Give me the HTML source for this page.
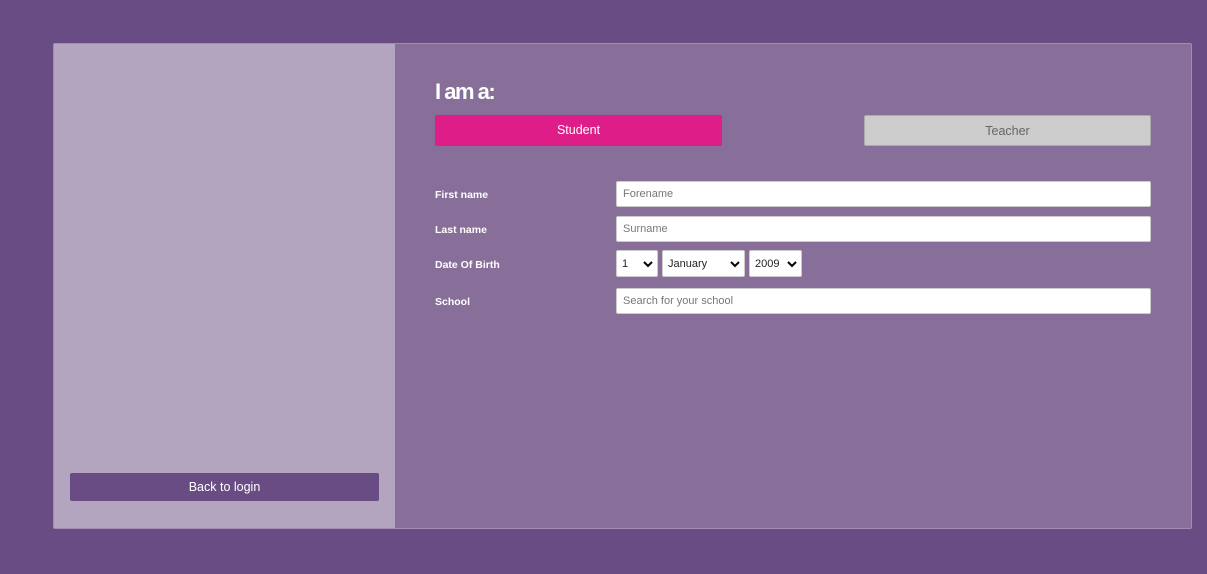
<!DOCTYPE html>
<html><head><style>
*{box-sizing:border-box;margin:0;padding:0}
body{width:1207px;height:574px;background:#684c83;font-family:"Liberation Sans",sans-serif;position:relative;overflow:hidden}
.card{position:absolute;left:53px;top:43px;width:1139px;height:486px;background:#876f99;border:1px solid #a08db0;border-radius:2px}
.left{position:absolute;left:0;top:0;width:341px;height:484px;background:#b3a5c0}
.back{position:absolute;left:16px;top:429px;width:309px;height:28px;background:#684c83;border-radius:2px;color:#fff;font-size:12.5px;text-align:center;line-height:28px}
h1{position:absolute;left:381px;top:35px;color:#fff;font-size:22px;font-weight:bold;letter-spacing:-1.5px}
.btn{position:absolute;top:71px;height:31px;font-size:12.5px;text-align:center;line-height:30px;border-radius:2px}
.lbl{position:absolute;left:381px;color:#fff;font-size:10.5px;font-weight:bold}
.inp{position:absolute;left:562px;width:535px;height:26px;background:#fff;border:1px solid #ccc;border-radius:2px;font-size:11px;color:#777;padding-left:6px;line-height:24px}
.sel{position:absolute;top:206px;height:27px;background:#fff;border:1px solid #ccc;border-radius:2px;font-size:11px;color:#222;padding-left:5px;line-height:26px}
.sel svg{position:absolute;right:4px;top:10px}
</style></head><body>
<div class="card">
<div class="left"><div class="back">Back to login</div></div>
<h1>I am a:</h1>
<div class="btn" style="left:381px;width:287px;background:#de1d88;color:#fff">Student</div>
<div class="btn" style="left:810px;width:287px;background:#ccc;color:#666;border:1px solid #aaa">Teacher</div>
<div class="lbl" style="top:145px">First name</div>
<div class="inp" style="top:137px">Forename</div>
<div class="lbl" style="top:180px">Last name</div>
<div class="inp" style="top:172px">Surname</div>
<div class="lbl" style="top:215px">Date Of Birth</div>
<div class="sel" style="left:562px;width:42px">1<svg width="10" height="7"><path d="M1 1L5 5L9 1" stroke="#000" stroke-width="2" fill="none"/></svg></div>
<div class="sel" style="left:608px;width:83px">January<svg width="10" height="7"><path d="M1 1L5 5L9 1" stroke="#000" stroke-width="2" fill="none"/></svg></div>
<div class="sel" style="left:695px;width:53px">2009<svg width="10" height="7"><path d="M1 1L5 5L9 1" stroke="#000" stroke-width="2" fill="none"/></svg></div>
<div class="lbl" style="top:252px">School</div>
<div class="inp" style="top:244px">Search for your school</div>
</div>
</body></html>
